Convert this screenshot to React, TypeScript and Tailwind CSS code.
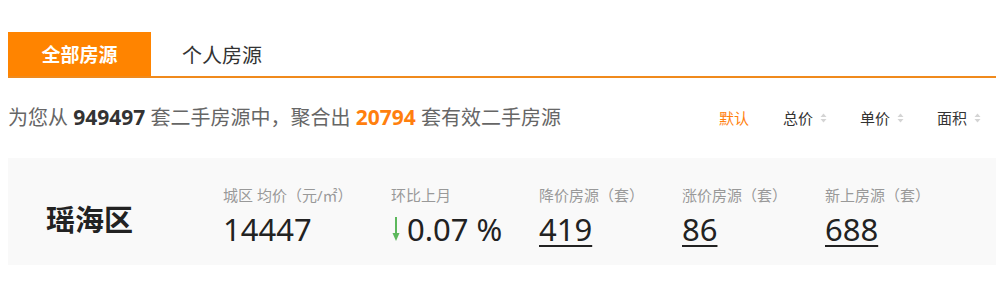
import React from 'react';

const font = { fontFamily: '"Noto Sans", "Noto Sans CJK SC", sans-serif' };

function SortArrow() {
  return (
    <svg width="7" height="10" viewBox="0 0 7 10" className="ml-[7px]">
      <path d="M3.5 0.5 L6.5 4 H0.5 Z" fill="#d4d4d4" />
      <path d="M3.5 9.5 L6.5 6 H0.5 Z" fill="#d4d4d4" />
    </svg>
  );
}

const stats = [
  { label: '城区 均价（元/㎡）', value: '14447', w: 'w-[168px]' },
  { label: '环比上月', value: '0.07 %', w: 'w-[148px]', down: true },
  { label: '降价房源（套）', value: '419', w: 'w-[143px]', link: true },
  { label: '涨价房源（套）', value: '86', w: 'w-[143px]', link: true },
  { label: '新上房源（套）', value: '688', w: 'w-[143px]', link: true },
];

export default function App() {
  return (
    <div className="w-[996px] h-[281px] bg-white pl-[8px] pt-[32px]" style={font}>
      {/* tabs */}
      <div className="flex items-end border-b-2 border-[#f08a1c] h-[46px]">
        <div className="w-[143px] h-[44px] pt-[3px] bg-[#ff8400] text-white font-bold text-[19px] flex items-center justify-center">
          全部房源
        </div>
        <div className="h-[44px] pt-[3px] flex items-center pl-[31px] text-[20px] text-[#333]">个人房源</div>
      </div>

      {/* summary + sort */}
      <div className="flex items-center justify-between h-[80px] pr-[15px]">
        <div className="text-[20px] text-[#666]">
          为您从 <span className="font-bold text-[21px] text-[#333]">949497</span> 套二手房源中，聚合出{' '}
          <span className="font-bold text-[21px] text-[#ff7f0e]">20794</span> 套有效二手房源
        </div>
        <div className="flex items-center text-[15px] text-[#333]">
          <span className="text-[#ff7f0e] mr-[34px]">默认</span>
          <span className="flex items-center mr-[33px]">总价<SortArrow /></span>
          <span className="flex items-center mr-[33px]">单价<SortArrow /></span>
          <span className="flex items-center">面积<SortArrow /></span>
        </div>
      </div>

      {/* stats */}
      <div className="flex items-center h-[107px] bg-[#f9f9f9] pl-[38px] pt-[10px]">
        <div className="w-[177px] text-[29px] font-bold text-[#222] pt-[6px]">瑶海区</div>
        {stats.map((s) => (
          <div key={s.label} className={`${s.w} flex flex-col`}>
            <div className="text-[15px] text-[#999] leading-[20px]">{s.label}</div>
            <div className="flex items-center text-[31px] text-[#222] leading-[40px] mt-[4px]">
              {s.down && (
                <svg width="10" height="26" viewBox="0 0 10 26" className="mr-[6px]">
                  <path d="M5 1 V22" stroke="#5cb85c" strokeWidth="2" />
                  <path d="M1.5 17 L5 25 L8.5 17 Z" fill="#5cb85c" />
                </svg>
              )}
              {s.link ? (
                <span className="underline decoration-[1.5px] underline-offset-[4px]">{s.value}</span>
              ) : (
                <span>{s.value}</span>
              )}
            </div>
          </div>
        ))}
      </div>
    </div>
  );
}
